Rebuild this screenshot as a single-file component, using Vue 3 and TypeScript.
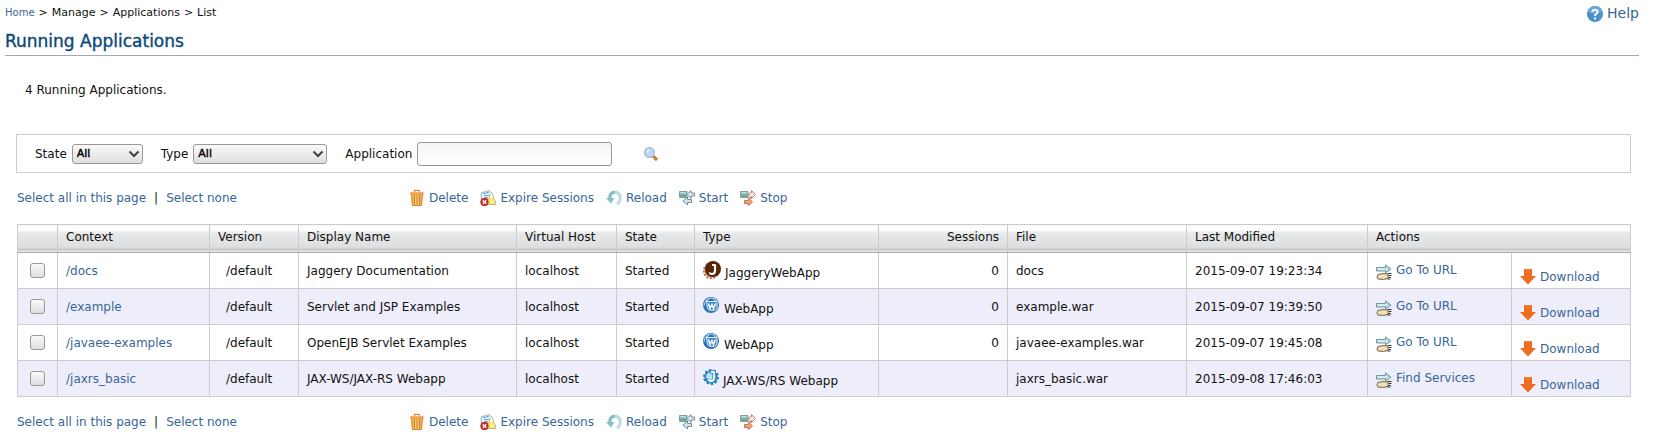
<script setup lang="ts">
import { reactive, ref } from 'vue'

type AppKind = 'jaggery' | 'webapp' | 'jaxws'

interface WebApp {
  context: string
  version: string
  displayName: string
  host: string
  state: string
  kind: AppKind
  type: string
  sessions: string
  file: string
  modified: string
  action: string
}

const apps: WebApp[] = [
  { context: '/docs', version: '/default', displayName: 'Jaggery Documentation', host: 'localhost', state: 'Started', kind: 'jaggery', type: 'JaggeryWebApp', sessions: '0', file: 'docs', modified: '2015-09-07 19:23:34', action: 'Go To URL' },
  { context: '/example', version: '/default', displayName: 'Servlet and JSP Examples', host: 'localhost', state: 'Started', kind: 'webapp', type: 'WebApp', sessions: '0', file: 'example.war', modified: '2015-09-07 19:39:50', action: 'Go To URL' },
  { context: '/javaee-examples', version: '/default', displayName: 'OpenEJB Servlet Examples', host: 'localhost', state: 'Started', kind: 'webapp', type: 'WebApp', sessions: '0', file: 'javaee-examples.war', modified: '2015-09-07 19:45:08', action: 'Go To URL' },
  { context: '/jaxrs_basic', version: '/default', displayName: 'JAX-WS/JAX-RS Webapp', host: 'localhost', state: 'Started', kind: 'jaxws', type: 'JAX-WS/RS Webapp', sessions: '', file: 'jaxrs_basic.war', modified: '2015-09-08 17:46:03', action: 'Find Services' },
]

const columns = ['check', 'context', 'version', 'name', 'host', 'state', 'type', 'sessions', 'file', 'modified', 'action', 'download']
const toolbars = ['top', 'bottom']
const commands = ['Delete', 'Expire Sessions', 'Reload', 'Start', 'Stop']

const state = ref('All')
const kind = ref('All')
const search = ref('')
const selected = reactive<Record<string, boolean>>({})

function selectAll(value: boolean): void {
  apps.forEach((app) => {
    selected[app.context] = value
  })
}
</script>

<template>
  <div class="page">
    <header class="top">
      <nav class="crumbs" aria-label="Breadcrumb"><a href="#">Home</a><span>&gt;</span><span>Manage</span><span>&gt;</span><span>Applications</span><span>&gt;</span><span>List</span></nav>
      <a class="help" href="#">
        <svg width="16" height="16" viewBox="0 0 16 16" aria-hidden="true">
          <circle cx="8" cy="8" r="8" fill="#4a8fd0" />
          <path d="M1 6a7 6 0 0 1 14 0q-7 4-14 0z" fill="#6aa7df" />
          <path d="M5.4 6C5.4 2.8 10.8 2.9 10.6 6 10.5 7.8 8 7.8 8 10M8 11.4v2" fill="none" stroke="#fff" stroke-width="2" />
        </svg>
        <span>Help</span>
      </a>
    </header>
    <h1>Running Applications</h1>

    <main>
      <p class="count">4 Running Applications.</p>

      <form class="filter" @submit.prevent>
        <div class="field">
          <label for="state">State</label>
          <span class="select state-select">
            <select id="state" v-model="state"><option>All</option><option>Started</option><option>Stopped</option></select>
            <svg width="12" height="8" viewBox="0 0 12 8" aria-hidden="true"><path d="M1.5 1.5 6 6l4.5-4.5" fill="none" stroke="#3c4347" stroke-width="2" /></svg>
          </span>
        </div>
        <div class="field">
          <label for="type">Type</label>
          <span class="select type-select">
            <select id="type" v-model="kind"><option>All</option><option>WebApp</option><option>JaggeryWebApp</option></select>
            <svg width="12" height="8" viewBox="0 0 12 8" aria-hidden="true"><path d="M1.5 1.5 6 6l4.5-4.5" fill="none" stroke="#3c4347" stroke-width="2" /></svg>
          </span>
        </div>
        <div class="field">
          <label for="application">Application</label>
          <input id="application" v-model="search" type="text" />
        </div>
        <button class="search" type="submit" aria-label="Search">
          <svg width="14" height="14" viewBox="0 0 14 14" aria-hidden="true">
            <path d="m9 9 4 4" stroke="#a8691f" stroke-width="3" />
            <path d="m9 9 3.5 3.5" stroke="#e2ae62" stroke-width="1" />
            <circle cx="5.5" cy="5.5" r="4.8" fill="#b9dafa" stroke="#a3b9dc" stroke-width="1.4" />
            <path d="M3 5.5Q3.5 3 6 2.5" fill="none" stroke="#e2f1ff" stroke-width="1.5" />
          </svg>
        </button>
      </form>

      <template v-for="place in toolbars" :key="place">
        <div class="toolbar">
          <div class="selection">
            <a href="#" @click.prevent="selectAll(true)">Select all in this page</a>
            <span>|</span>
            <a href="#" @click.prevent="selectAll(false)">Select none</a>
          </div>
          <div class="commands">
            <a v-for="command in commands" :key="command" href="#">
              <svg width="16" height="16" viewBox="0 0 16 16" aria-hidden="true">
                <template v-if="command === 'Delete'">
                  <path d="M5.5 2V.5h5V2" fill="none" stroke="#d07a1c" />
                  <path d="M2.5 4.5h11l-.8 11H3.3z" fill="#f3b350" stroke="#d9862a" />
                  <path d="M5.5 6v8M8 6v8M10.5 6v8" stroke="#c97922" />
                  <path d="M6.7 6v8M9.3 6v8" stroke="#fbdc8c" />
                  <path d="M1.5 2h13v3h-13z" fill="#e9973b" />
                  <path d="M2.5 3h11" stroke="#f8cd95" />
                </template>
                <template v-else-if="command === 'Expire Sessions'">
                  <path d="m1 3 8-2.5 4 4L8 10l-6.5.5z" fill="#eef6fc" stroke="#98b4c4" />
                  <path d="m3 4 6-2M4 6l6-1M4 8l4-.5" stroke="#4e9fc9" />
                  <path d="M6 14.5q1-5 3.5-6-.7-3.5 1.5-4.5 3 0 2.5 4.5 2.5 2 2 6z" fill="#f8ec76" stroke="#bdb68c" />
                  <path d="M10 8q-.5-3.500 1-4 2 .3 1.500 4z" fill="#fff" />
                  <circle cx="4.500" cy="12" r="3.900" fill="#db2926" stroke="#9c1b1a" stroke-width=".5" />
                  <path d="m2.800 10.300 3.400 3.400m0-3.400-3.400 3.400" stroke="#fff" stroke-width="1.300" />
                </template>
                <template v-else-if="command === 'Reload'">
                  <path d="M4 9C3 4 7 1 10.500 2.500 15.500 4.500 15.500 11 11 14" fill="none" stroke="#b7dce1" stroke-width="3" />
                  <path d="M4 9C3 5 5.500 2.500 8.500 2" fill="none" stroke="#7fbfca" stroke-width="3" />
                  <path d="M0 8h8.500L5 13.500z" fill="#82bdca" />
                </template>
                <template v-else>
                  <path d="M.5 1.500h7.500v6H.5z" fill="#8cb8d2" stroke="#7d9aa8" />
                  <path d="M1.500 4.500h5.500v2.300H1.500z" fill="#68b05b" />
                  <path d="M1.500 2.300h5v1h-5z" fill="#d7ecf8" />
                  <template v-if="command === 'Start'">
                    <path d="m8 4.500 4-4v2.500h3.500v3H12v2.500z" fill="#dcebf1" stroke="#718f9e" />
                    <path d="m4 11 4.500-4v2.500h4v3h-4V15z" fill="#d5e7ee" stroke="#718f9e" />
                  </template>
                  <template v-else>
                    <path d="M8.500 6.500q0-4 3-4V.5l4 4-4 4v-2q-1 0-1 2z" fill="#fae5d9" stroke="#b88771" />
                    <path d="M4.500 10.500h4V8l4 4-4 3.500v-2h-4z" fill="#f4a17e" stroke="#c97653" />
                  </template>
                </template>
              </svg>
              <span>{{ command }}</span>
            </a>
          </div>
        </div>

        <table v-if="place === 'top'">
          <colgroup><col v-for="column in columns" :key="column" :class="'col-' + column" /></colgroup>
          <thead>
            <tr>
              <th></th>
              <th>Context</th>
              <th>Version</th>
              <th>Display Name</th>
              <th>Virtual Host</th>
              <th>State</th>
              <th>Type</th>
              <th class="num">Sessions</th>
              <th>File</th>
              <th>Last Modified</th>
              <th colspan="2">Actions</th>
            </tr>
          </thead>
          <tbody>
            <tr v-for="app in apps" :key="app.context">
              <td class="check"><input v-model="selected[app.context]" type="checkbox" :aria-label="app.context" /></td>
              <td><a href="#">{{ app.context }}</a></td>
              <td class="version">{{ app.version }}</td>
              <td>{{ app.displayName }}</td>
              <td>{{ app.host }}</td>
              <td>{{ app.state }}</td>
              <td>
                <div class="kind" :class="app.kind">
                  <svg v-if="app.kind === 'jaggery'" width="18" height="18" viewBox="0 0 18 18" aria-hidden="true">
                    <circle cx="8" cy="10" r="7.200" fill="none" stroke="#b36b43" stroke-width="2" stroke-dasharray="2 1.500" />
                    <circle cx="8" cy="10" r="6.500" fill="#c98b66" />
                    <circle cx="10" cy="8" r="8" fill="#572503" />
                    <path d="M9 4h3.500M12 3.500V10q0 3-3 3-2 0-2.500-1.500" fill="none" stroke="#fff" stroke-width="2.200" />
                  </svg>
                  <svg v-else-if="app.kind === 'webapp'" width="16" height="16" viewBox="0 0 16 16" aria-hidden="true">
                    <circle cx="8" cy="8" r="8" fill="#2672b8" />
                    <path d="M2 5Q4 1 8 1t6 3M1 9q0-4 3-6M6 2 4 4m6-3 2 3" fill="none" stroke="#b4d3ee" />
                    <path d="M3.500 4.500H14V11q-1 2.500-4 2.500-5 0-5.500-2z" fill="#3f87c9" stroke="#e7f3fc" />
                    <path d="m5.500 6.500 1.500 5 2-4 1.500 4 2-5" fill="none" stroke="#fff" stroke-width="1.500" />
                  </svg>
                  <svg v-else width="16" height="16" viewBox="0 0 16 16" aria-hidden="true">
                    <circle cx="8" cy="8" r="7" fill="none" stroke="#2c7fc0" stroke-width="2" stroke-dasharray="2.400 2" />
                    <circle cx="8" cy="8" r="5.800" fill="#b9e4f8" stroke="#2c7fc0" stroke-width="1.600" />
                    <path d="M7 3h4v6q0 3.500-3 3.500T5 10V9" fill="none" stroke="#2c8acb" stroke-width="3.400" />
                    <path d="M8 3h3v6q0 3-3 3-2.500 0-2.500-2.500" fill="none" stroke="#f5fcff" stroke-width="1.800" />
                  </svg>
                  <span>{{ app.type }}</span>
                </div>
              </td>
              <td class="num">{{ app.sessions }}</td>
              <td>{{ app.file }}</td>
              <td>{{ app.modified }}</td>
              <td>
                <a class="action" href="#">
                  <svg width="16" height="16" viewBox="0 0 16 16" aria-hidden="true">
                    <path d="M.5 3.500h9V.8L15 5.200 9.500 9V7H.5z" fill="#b9d6df" stroke="#6f98a5" />
                    <path d="M1.500 5H11" stroke="#f4fbfd" />
                    <path d="M2 10.500q5-1.500 10-.5v4.500q-4 1.500-10 .5-2-2 0-4.500z" fill="#f5dfb6" stroke="#6e614b" />
                    <path d="M12 9.500h3.500M12.500 11.500h3M12.500 13.500H15M11.500 15h3" stroke="#343434" />
                  </svg>
                  <span>{{ app.action }}</span>
                </a>
              </td>
              <td class="download-cell">
                <a class="download" href="#">
                  <svg width="16" height="16" viewBox="0 0 16 16" aria-hidden="true"><path d="M4 0h8v7h4l-8 8.500L0 7h4z" fill="#ee6c1d" /><path d="M5 1h6" stroke="#f58a48" /></svg>
                  <span>Download</span>
                </a>
              </td>
            </tr>
          </tbody>
        </table>
      </template>
    </main>
  </div>
</template>

<style>
body {
  margin: 0;
  background: #fff;
}
</style>

<style scoped>
.page {
  padding: 5px 14px 0 5px;
  font-family: "DejaVu Sans", Verdana, sans-serif;
  font-size: 12px;
  line-height: 16px;
  color: #111;
}
a {
  color: #386698;
  text-decoration: none;
}
svg {
  display: block;
  flex: none;
}
.top {
  display: flex;
  justify-content: space-between;
  height: 21px;
}
.crumbs {
  display: flex;
  align-items: baseline;
  gap: 4px;
  font-size: 11px;
}
.crumbs a {
  font-size: 10px;
}
.help {
  display: flex;
  gap: 4px;
  font-size: 14px;
}
.help svg {
  margin-top: 1px;
}
h1 {
  margin: 0;
  padding: 4px 0 2px;
  border-bottom: 1px solid #9ca7cb;
  font-size: 17px;
  font-weight: 400;
  line-height: 23px;
  color: #0b4a78;
  -webkit-text-stroke: 0.4px #0b4a78;
}
main {
  padding: 26px 8px 0 11px;
}
.count {
  margin: 0 0 36px 9px;
}
.filter {
  display: flex;
  align-items: center;
  gap: 18px;
  height: 37px;
  padding-left: 18px;
  border: 1px solid #ccc;
}
.field {
  display: flex;
  align-items: center;
  gap: 5px;
}
.select {
  position: relative;
  display: block;
}
.state-select {
  width: 71px;
}
.type-select {
  width: 134px;
}
.select svg {
  position: absolute;
  top: 6px;
  right: 3px;
  pointer-events: none;
}
select {
  display: block;
  width: 100%;
  height: 20px;
  padding: 0 4px;
  border: 1px solid #999;
  border-radius: 3px;
  background: linear-gradient(#fafafa, #dedede);
  appearance: none;
  font: 11px "DejaVu Sans", sans-serif;
  color: #000;
  -webkit-text-stroke: 0.4px #000;
}
.field input {
  box-sizing: border-box;
  width: 195px;
  height: 24px;
  padding: 0 4px;
  border: 1px solid #999;
  border-radius: 3px;
  background: linear-gradient(#f4f4f4, #fff);
  font: inherit;
}
.search {
  margin-left: 14px;
  padding: 0;
  border: 0;
  background: none;
}
.toolbar {
  display: flex;
  padding: 17px 0 18px 1px;
}
.selection {
  display: flex;
  flex: none;
  gap: 8px;
  width: 392px;
}
.commands {
  display: flex;
  gap: 12px;
}
.commands a {
  display: flex;
  gap: 4px;
}
table {
  width: calc(100% - 1px);
  margin-left: 1px;
  border: 1px solid #ccc;
  border-collapse: collapse;
  table-layout: fixed;
}
.col-check { width: 40px; }
.col-context { width: 152px; }
.col-version { width: 89px; }
.col-name { width: 218px; }
.col-host { width: 100px; }
.col-state { width: 78px; }
.col-type { width: 184px; }
.col-sessions { width: 129px; }
.col-file { width: 179px; }
.col-modified { width: 181px; }
.col-action { width: 144px; }
.col-download { width: 119px; }
th,
td {
  padding: 0 5px 0 8px;
  border: 1px solid #ccc;
  font-weight: 400;
  text-align: left;
  white-space: nowrap;
}
th {
  box-sizing: border-box;
  height: 28px;
  padding-bottom: 4px;
  border-bottom-color: #aaa;
  background: linear-gradient(#fff 0 4px, #e6e7e8 8px, #dddfe0 22px, #cacccd 23px 25px, #eee 26px);
}
td {
  height: 35px;
}
tbody tr:nth-child(even) {
  background: #eeeefa;
}
.num {
  padding-right: 8px;
  text-align: right;
}
.version {
  padding-left: 16px;
}
.check {
  padding: 0;
}
.check input {
  display: block;
  width: 15px;
  height: 15px;
  margin: 0 auto;
  border: 1px solid #999;
  border-radius: 3px;
  background: linear-gradient(#fafafa, #dedede);
  appearance: none;
}
.check input:checked {
  background: #386698;
}
.kind {
  display: flex;
  gap: 5px;
}
.kind span {
  padding-top: 4px;
}
.jaggery,
.jaxws {
  gap: 4px;
}
.action,
.download {
  display: flex;
  gap: 4px;
}
.action svg {
  margin-top: 2px;
}
.download-cell {
  height: 23px;
  padding-top: 12px;
}
</style>
